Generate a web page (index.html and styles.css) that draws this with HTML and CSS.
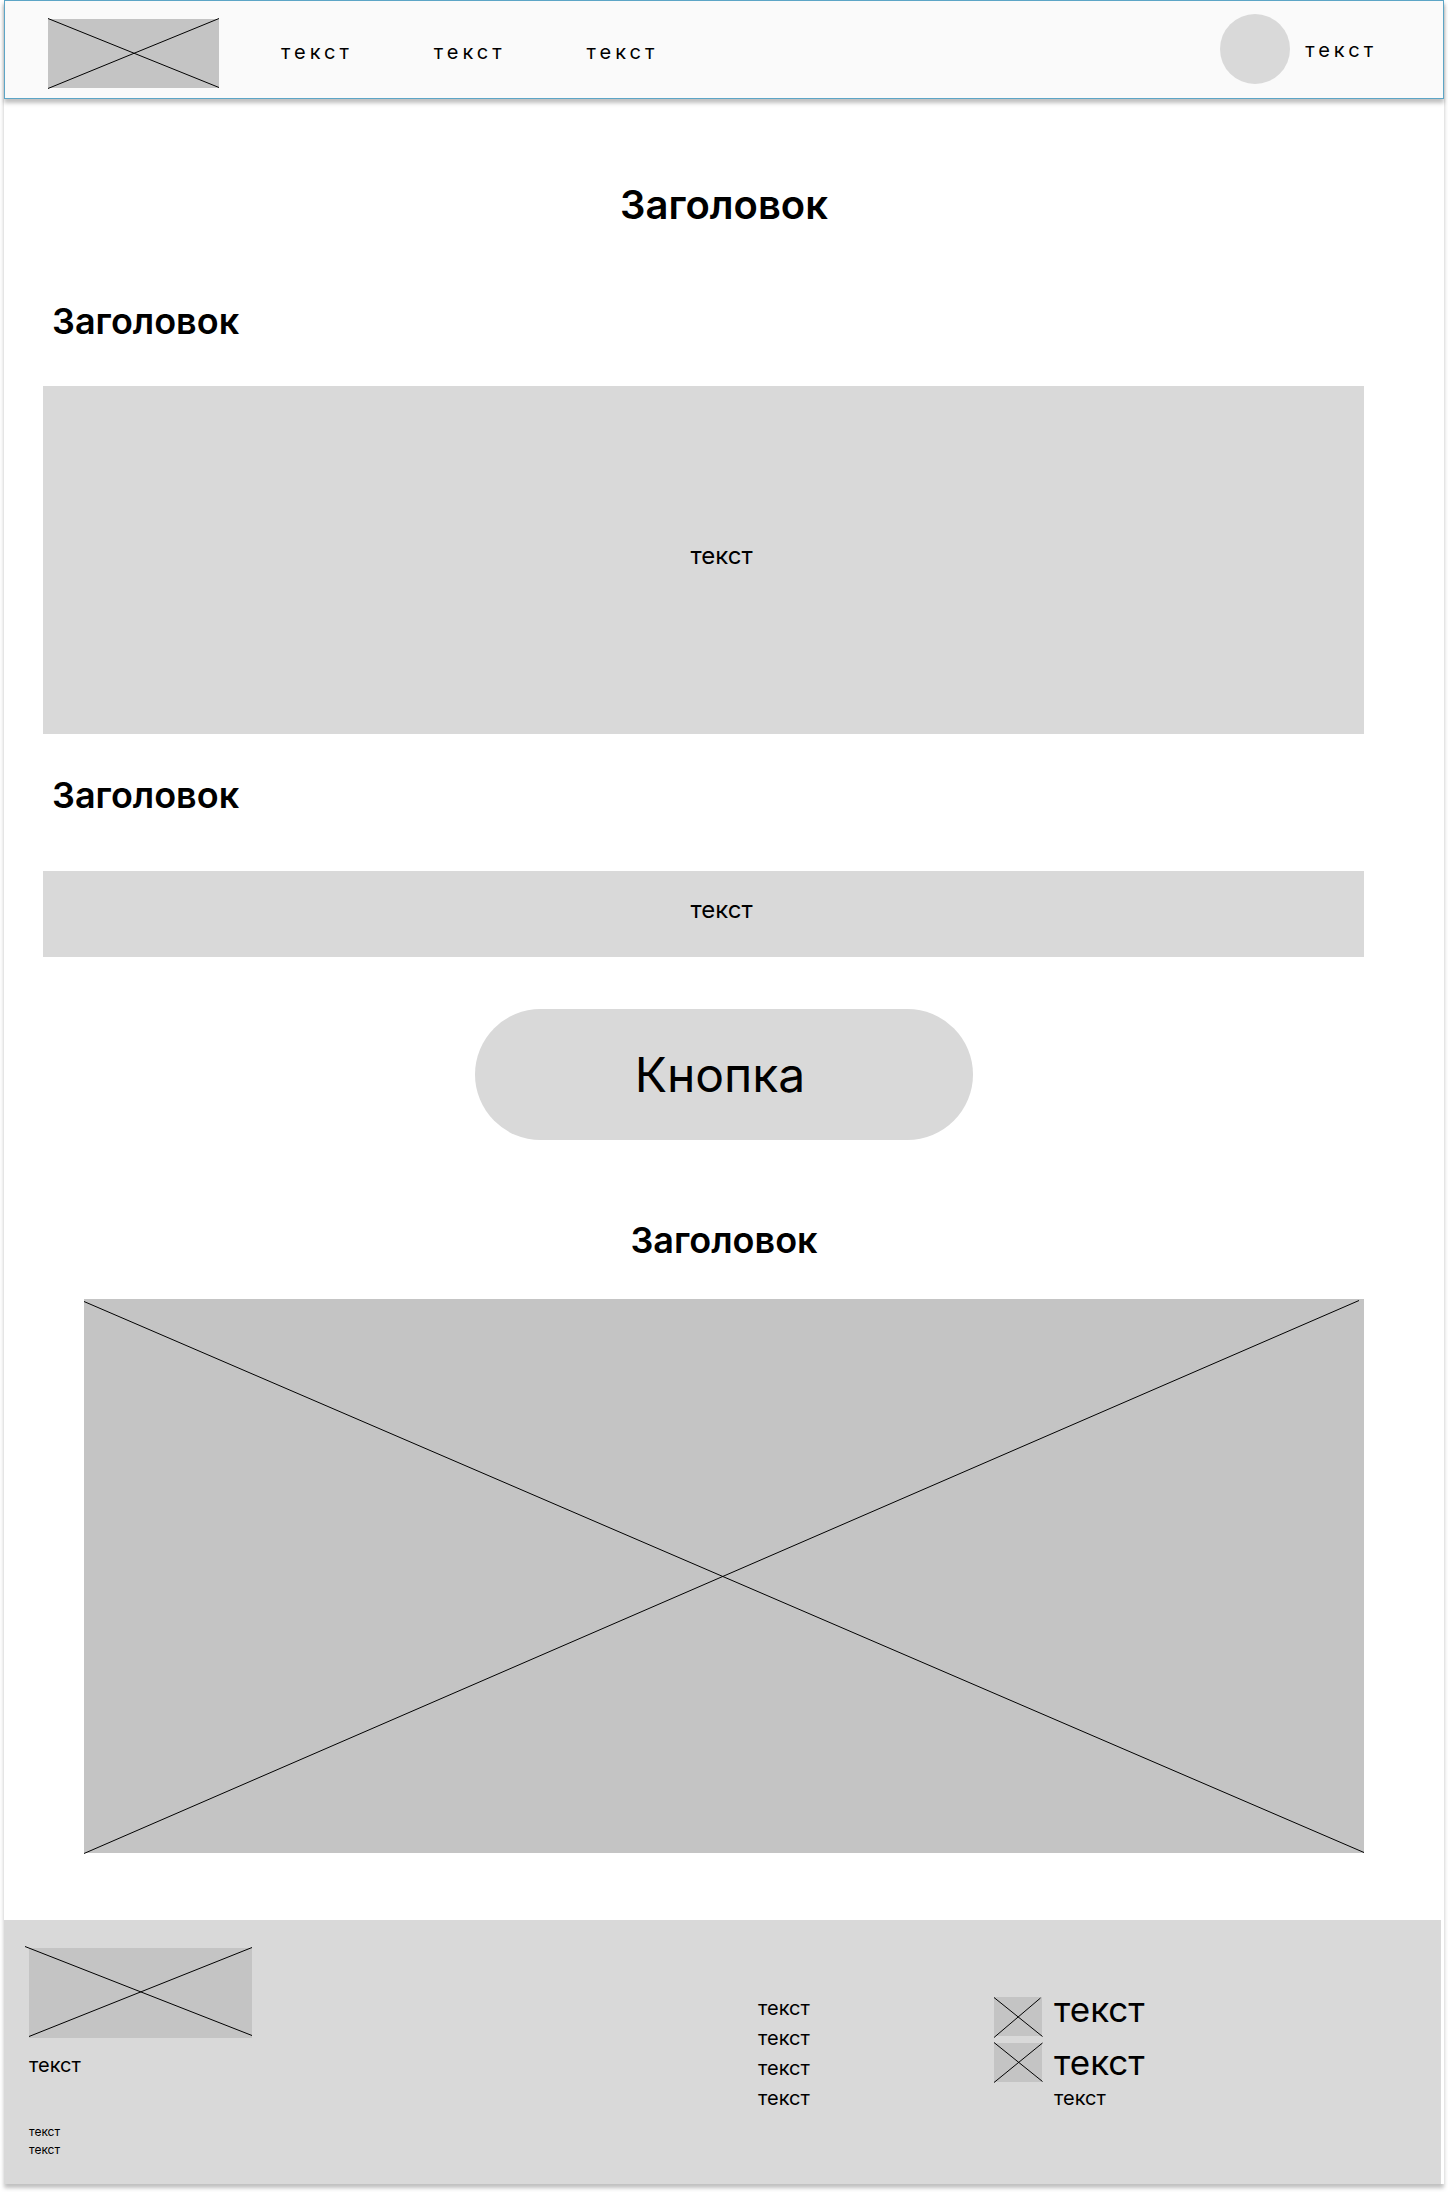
FILE: index.html
```html
<!DOCTYPE html>
<html lang="ru">
<head>
  <meta charset="utf-8">
  <meta name="viewport" content="width=device-width, initial-scale=1">
  <title>Заголовок</title>
  <link rel="stylesheet" href="styles.css">
</head>
<body>
  <div class="page">
    <header class="header">
      <div class="header-main">
        <svg class="placeholder header-logo" viewBox="0 0 171 69" preserveAspectRatio="none" aria-hidden="true">
          <path d="M0 -0.5L171 68.5M0 69.5L171 -0.5"/>
        </svg>
        <nav class="nav">
          <a href="#">текст</a>
          <a href="#">текст</a>
          <a href="#">текст</a>
        </nav>
      </div>
      <a class="user" href="#"><span class="avatar"></span><span class="user-name">текст</span></a>
    </header>

    <main>
      <h1 class="title">Заголовок</h1>

      <section class="block">
        <h2 class="heading">Заголовок</h2>
        <div class="panel panel-large"><p>текст</p></div>
      </section>

      <section class="block">
        <h2 class="heading">Заголовок</h2>
        <div class="panel panel-small"><p>текст</p></div>
      </section>

      <button class="button" type="button">Кнопка</button>

      <section class="gallery">
        <h2 class="heading">Заголовок</h2>
        <svg class="placeholder picture" viewBox="0 0 1280 554" preserveAspectRatio="none" aria-hidden="true">
          <path d="M0 2.5L1280 553.5M0 554.5L1275 1.5"/>
        </svg>
      </section>
    </main>

    <footer class="footer">
      <div class="about">
        <svg class="placeholder footer-logo" viewBox="0 0 223 90" preserveAspectRatio="none" aria-hidden="true">
          <path d="M-4 -1.5L223 87.5M0 88.5L223 -0.5"/>
        </svg>
        <p class="tagline">текст</p>
        <p class="legal">текст<br>текст</p>
      </div>
      <nav class="footer-links">
        <a href="#">текст</a>
        <a href="#">текст</a>
        <a href="#">текст</a>
        <a href="#">текст</a>
      </nav>
      <div class="contacts">
        <div class="contact-icons">
          <svg class="placeholder icon" viewBox="0 0 48 39" aria-hidden="true">
            <path d="M0 0.5L48.5 39.5M0 40.5L46.5 1"/>
          </svg>
          <svg class="placeholder icon" viewBox="0 0 48 39" aria-hidden="true">
            <path d="M0 -0.5L48.5 38.5M0 39.5L48.5 0"/>
          </svg>
        </div>
        <div class="contact-list">
          <a class="contact" href="#">текст</a>
          <a class="contact" href="#">текст</a>
          <p class="contact-note">текст</p>
        </div>
      </div>
    </footer>
  </div>
</body>
</html>
```
FILE: styles.css
```css
* {
  box-sizing: border-box;
}

body {
  margin: 0;
  padding: 0 4px 8px;
  background: #fff;
  color: #000;
  font-family: Inter, "Noto Sans", sans-serif;
  font-size: 20px;
  line-height: 30px;
}

h1,
h2,
p {
  margin: 0;
}

a {
  color: inherit;
  text-decoration: none;
}

.page {
  background: #fff;
  box-shadow: 0 4px 4px rgba(0, 0, 0, 0.25);
}

.placeholder {
  display: block;
  overflow: visible;
  background: #c4c4c4;
}

.placeholder path {
  fill: none;
  stroke: #000;
  stroke-width: 1;
  vector-effect: non-scaling-stroke;
}

/* Header */

.header {
  display: flex;
  justify-content: space-between;
  align-items: flex-start;
  padding: 13px 66px 10px 43px;
  border: 1px solid #5ca5c6;
  background: #fafafa;
  box-shadow: 0 4px 4px rgba(0, 0, 0, 0.25);
  letter-spacing: 4px;
}

.header-main {
  display: flex;
  align-items: center;
  gap: 62px;
  padding-top: 5px;
}

.header-logo {
  width: 171px;
  height: 69px;
}

.nav {
  display: flex;
  gap: 81px;
  padding-bottom: 3px;
}

.user {
  display: flex;
  align-items: center;
  gap: 15px;
}

.user-name {
  padding-top: 2px;
}

.avatar {
  width: 70px;
  height: 70px;
  border-radius: 50%;
  background: #d9d9d9;
}

/* Content */

.title {
  padding-top: 82px;
  font-size: 40px;
  font-weight: 600;
  line-height: 48px;
  text-align: center;
}

.heading {
  font-size: 36px;
  font-weight: 600;
  line-height: 44px;
}

.block {
  padding: 0 80px 0 39px;
}

.block .heading {
  padding-left: 9px;
}

.title + .block {
  margin-top: 70px;
}

.block + .block {
  margin-top: 39px;
}

.panel {
  display: flex;
  align-items: center;
  justify-content: center;
  padding: 0 0 8px 36px;
  background: #d9d9d9;
  font-size: 24px;
}

.panel-large {
  min-height: 348px;
  margin-top: 43px;
}

.panel-small {
  min-height: 86px;
  margin-top: 54px;
}

.button {
  display: block;
  width: 498px;
  max-width: 100%;
  height: 131px;
  margin: 52px auto 0;
  padding: 0 8px 0 0;
  border: 0;
  border-radius: 66px;
  background: #d9d9d9;
  color: inherit;
  font: inherit;
  font-size: 48px;
}

.gallery {
  padding: 78px 80px 67px;
}

.gallery .heading {
  text-align: center;
}

.picture {
  width: 100%;
  height: 554px;
  margin-top: 37px;
}

/* Footer */

.footer {
  display: grid;
  grid-template-columns: 729fr 236fr 447fr;
  margin-right: 3px;
  padding: 28px 0 25px 25px;
  background: #d9d9d9;
}

.footer-logo {
  width: 223px;
  height: 90px;
}

.tagline {
  margin-top: 12px;
}

.legal {
  margin-top: 43px;
  font-size: 12px;
  line-height: 18px;
}

.footer-links {
  display: flex;
  flex-direction: column;
  align-items: flex-start;
  padding-top: 45px;
}

.contacts {
  display: flex;
  gap: 12px;
  padding-top: 43px;
}

.contact-icons {
  display: grid;
  align-content: start;
  gap: 7px;
  padding-top: 6px;
}

.icon {
  width: 48px;
  height: 39px;
}

.contact-list {
  display: flex;
  flex-direction: column;
  align-items: flex-start;
}

.contact {
  font-size: 35px;
  line-height: 36px;
}

.contact + .contact {
  margin-top: 17px;
}

.contact-note {
  margin-top: 3px;
}
```
